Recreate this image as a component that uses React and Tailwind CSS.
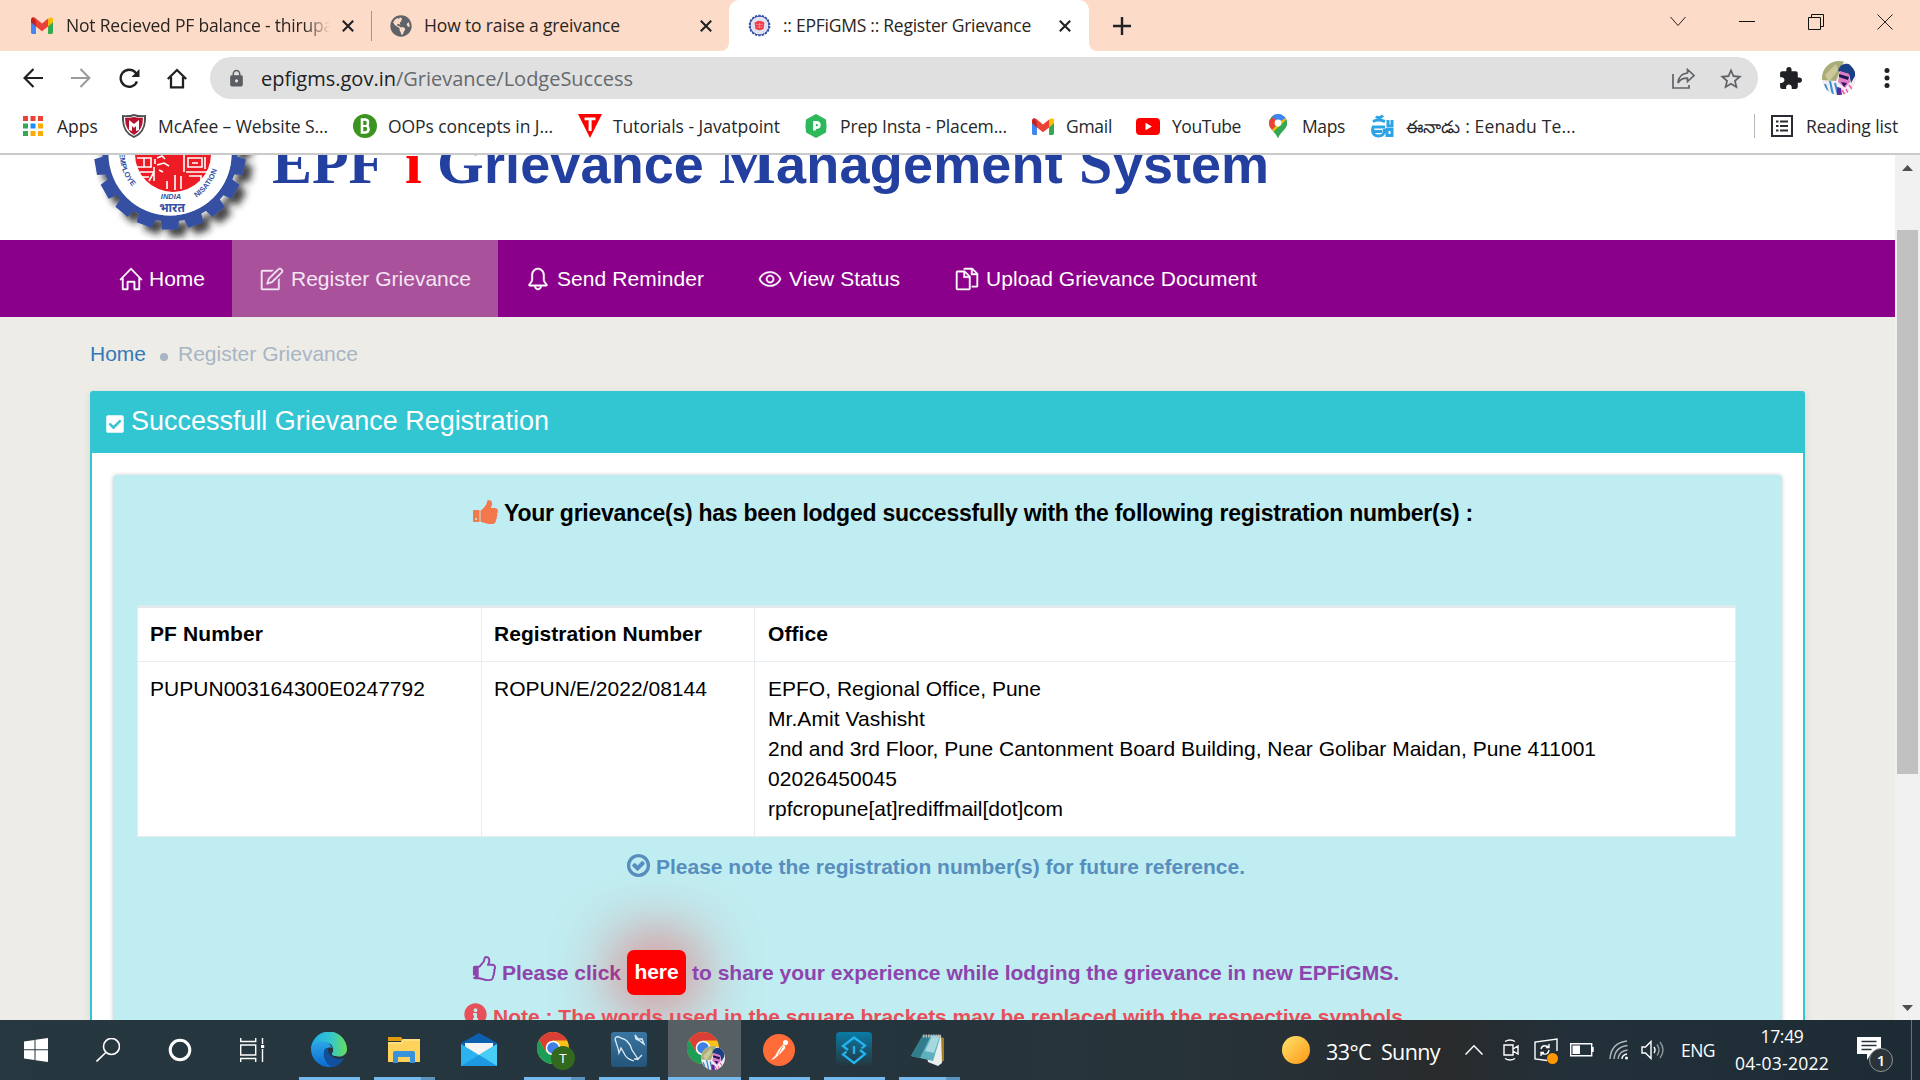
import React, { useLayoutEffect, useRef, useState } from "react";
import { SlHome, SlNote, SlBell, SlEye, SlDocs } from "react-icons/sl";
import { FaCheckSquare, FaInfoCircle, FaGlobeAmericas } from "react-icons/fa";
import { MdExtension, MdLock, MdStarBorder } from "react-icons/md";

/* Text run whose tracking is adjusted so that it spans `w` pixels. */
function T({ w, className = "", children }) {
  const ref = useRef(null);
  const [ls, setLs] = useState(0);
  useLayoutEffect(() => {
    const n = ref.current.textContent.length;
    setLs((w - ref.current.getBoundingClientRect().width) / n);
  }, [w]);
  return (
    <span ref={ref} className={"inline-block shrink-0 whitespace-pre " + className} style={{ letterSpacing: ls + "px" }}>
      {children}
    </span>
  );
}

const Gmail = ({ className = "" }) => (
  <svg viewBox="0 0 24 18" preserveAspectRatio="none" className={"h-[17px] w-[22px] shrink-0 " + className}>
    <path d="M0 3v13.500Q0 18 1.600 18H5.400V7z" fill="#4285f4" />
    <path d="M24 3v13.500q0 1.500-1.600 1.500H18.600V7z" fill="#34a853" />
    <path d="M18.600 1.500L22 .3Q24 .8 24 3v2.500L18.600 10z" fill="#fbbc04" />
    <path d="M5.400 1.500L2 .3Q0 .8 0 3v2.500L5.400 10z" fill="#c5221f" />
    <path d="M2 .3Q3.500-.2 5.400 1.500L12 6.800l6.600-5.300V10L12 15.200 5.400 10V4z" fill="#ea4335" />
  </svg>
);

const Cross = ({ className = "" }) => (
  <svg viewBox="0 0 12 12" className={"h-3 w-3 shrink-0 " + className} stroke="#202124" strokeWidth="2.100">
    <path d="M.8.8l10.400 10.400M11.200.8L.8 11.200" />
  </svg>
);

const TEETH = Array.from({ length: 18 }, (_, i) => i * 20);

function Gear() {
  return (
    <g fill="#3650a2">
      {TEETH.map((a) => (
        <path key={a} d="M-9.500 63L-8 75.500H8L9.500 63z" transform={`rotate(${a})`} />
      ))}
      <path fillRule="evenodd" d="M-67.500 0a67.500 67.500 0 1 0 135 0a67.500 67.500 0 1 0-135 0M-61.500 0a61.500 61.500 0 1 1 123 0a61.500 61.500 0 1 1-123 0" />
    </g>
  );
}

function Emblem() {
  return (
    <svg viewBox="-91 1 180 85" className="h-[85px] w-[180px] shrink-0">
      <defs>
        <filter id="soft" x="-20%" y="-20%" width="140%" height="140%">
          <feDropShadow dx="7" dy="7" stdDeviation="3.500" floodColor="#222" floodOpacity="0.85" />
        </filter>
        <path id="arcL" d="M-48 -6A48 48 0 0 0 -10 47" />
        <path id="arcR" d="M16 50A52.500 52.500 0 0 0 51 -6" />
      </defs>
      <g transform="translate(-3 0)">
        <g filter="url(#soft)" transform="translate(2 0)">
          <Gear />
        </g>
        <circle cx="2" r="61.500" fill="#fff" />
        <circle cx="5" r="38" fill="#ed1c24" />
        <g fill="none" stroke="#fff" strokeWidth="1.600" transform="translate(4 0)">
          <path d="M-35 4h14v9h-14M-32 18h14v-5M-28 4v9M-30 23l7 0M-18 27v-9l-5 9M-15 4l5-2 3 3M-15 11l7-2 5 3M-13 16l4 2M12 1v17M16 4h14v9H16zM20 9h6M14 18h21M17 22h12v5M3 21v15M9 22v13M-5 27v8" />
          <path d="M33 3v12M-17 5v5" />
        </g>
        <g fill="#3650a2" fontFamily="Liberation Sans" fontSize="7.500">
          <text fontWeight="bold"><textPath href="#arcL" startOffset="5">EMPLOYE</textPath></text>
          <text fontWeight="bold"><textPath href="#arcR" startOffset="14">NISATION</textPath></text>
          <text x="3" y="45" textAnchor="middle" fontStyle="italic">INDIA</text>
          <text x="4" y="58" textAnchor="middle" fontSize="12" fontFamily="Noto Sans, sans-serif">भारत</text>
        </g>
      </g>
    </svg>
  );
}

function TabStrip() {
  return (
    <div className="flex h-[51px] items-center bg-[#fcdbc8] text-[17.5px] text-[#2b2522]">
      <Gmail className="ml-[31px]" />
      <div className="ml-[13px] w-[266px] overflow-hidden [mask-image:linear-gradient(to_right,black_238px,transparent_264px)]">
        <T w={267}>Not Recieved PF balance - thirupa</T>
      </div>
      <Cross className="ml-[10px]" />
      <div className="ml-[17px] h-[30px] w-px bg-[#a8938a]" />
      <FaGlobeAmericas className="ml-[18px] h-[22px] w-[22px] text-[#5f6368]" />
      <T w={196} className="ml-[12px]">How to raise a greivance</T>
      <Cross className="ml-[80px]" />
      <div className="ml-[9px] flex h-full items-end">
        <div className="h-2.5 w-2 bg-white">
          <div className="h-full w-full rounded-br-lg bg-[#fcdbc8]" />
        </div>
        <div className="flex h-full w-[360px] items-center rounded-t-[10px] bg-white">
          <svg viewBox="-80 -80 160 160" className="ml-[19px] h-[23px] w-[23px]">
            <Gear />
            <circle r="60" fill="#dfe2f3" />
            <path d="M-34-20Q0-45 34-20L28 25Q0 40-28 25z" fill="#ef3b42" />
            <path d="M-25-8h50M-20 10h40M0-20v40" stroke="#f9a" strokeWidth="5" />
          </svg>
          <T w={248} className="ml-[12px]">:: EPFiGMS :: Register Grievance</T>
          <Cross className="ml-[28px]" />
        </div>
        <div className="h-2.5 w-2 bg-white">
          <div className="h-full w-full rounded-bl-lg bg-[#fcdbc8]" />
        </div>
      </div>
      <svg viewBox="0 0 18 18" className="ml-[16px] h-[18px] w-[18px]" stroke="#202124" strokeWidth="2.400">
        <path d="M0 9h18M9 0v18" />
      </svg>
      <div className="mr-[27px] mb-2 ml-auto flex items-center gap-[53px]">
        <svg viewBox="0 0 16 16" className="h-4 w-4" fill="none" stroke="#222">
          <path d="M.5 3L8 11.500 15.500 3" />
        </svg>
        <svg viewBox="0 0 16 16" className="h-4 w-4" stroke="#111">
          <path d="M0 7.500h16" />
        </svg>
        <svg viewBox="0 0 16 16" className="h-4 w-4" fill="none" stroke="#111">
          <path d="M.5 3.500h12v12H.5zM3.500 3.500v-3h12v12h-3" />
        </svg>
        <svg viewBox="0 0 16 16" className="h-4 w-4" stroke="#222">
          <path d="M.5.5l15 15M15.500.5l-15 15" />
        </svg>
      </div>
    </div>
  );
}

function Avatar({ className = "", id }) {
  return (
    <svg viewBox="0 0 34 34" className={className}>
      <clipPath id={id}><circle cx="17" cy="17" r="17" /></clipPath>
      <g clipPath={`url(#${id})`}>
        <path d="M0 0h34v34H0z" fill="#f2edf4" />
        <path d="M0 0h22L14 20 0 19z" fill="#a9ae78" />
        <path d="M3 14L14 3l2 6-9 12z" fill="#cfc79c" />
        <path d="M16 10Q18 1 28 3q6 3 5 12l-4 7-2-9-8-2z" fill="#1b3f86" />
        <path d="M18 10l9 3 1 8-5 6-7-6z" fill="#e07cc4" />
        <path d="M17 13l10 3-1 3-9-3z" fill="#1a1550" />
        <path d="M19 21l6 1-3 4z" fill="#301668" />
        <path d="M8 20l3 14M3 23l4 11M13 22l3 12" stroke="#3d8fc9" strokeWidth="2" />
        <path d="M15 26l4 1 1 7h-5z" fill="#5c2aa0" />
        <path d="M20 29l3 5M27 24l3 4M24 28l2 4" stroke="#f25aa5" strokeWidth="1.500" />
      </g>
    </svg>
  );
}

function Toolbar() {
  return (
    <div className="flex h-[54px] items-center bg-white">
      <svg viewBox="0 0 20 20" className="ml-[23px] h-5 w-5" fill="none" stroke="#202124" strokeWidth="2.200">
        <path d="M20 10H2M10.500 1L1.600 10l8.900 9" />
      </svg>
      <svg viewBox="0 0 20 20" className="ml-[28px] h-5 w-5" fill="none" stroke="#9b9b9b" strokeWidth="2">
        <path d="M0 10h18M9.500 1l8.900 9-8.900 9" />
      </svg>
      <svg viewBox="0 0 21 21" className="ml-[28px] h-[21px] w-[21px]" fill="none" stroke="#202124" strokeWidth="2.400">
        <path d="M18 13.500A8.500 8.500 0 1 1 16.500 4.500L18 6" />
        <path d="M20.500 1v8h-8z" fill="#202124" stroke="none" />
      </svg>
      <svg viewBox="0 0 20 20" className="ml-[27px] h-[21px] w-[20px]" fill="none" stroke="#202124" strokeWidth="2.300">
        <path d="M.8 10.500L10 1.500l9.200 9M4 8.500v10.300h12V8.500" />
      </svg>
      <div className="ml-[23px] flex h-[42px] w-[1548px] items-center rounded-full bg-[#e0e0e0] pt-px">
        <MdLock className="ml-[17px] h-[19px] w-[19px] text-[#5a5d61]" />
        <T w={135} className="ml-[15px] text-[20px] text-[#202124]">epfigms.gov.in</T>
        <T w={237} className="text-[20px] text-[#666a6e]">/Grievance/LodgeSuccess</T>
        <svg viewBox="0 0 23 21" className="ml-auto h-[21px] w-[23px]" fill="none" stroke="#5f6368" strokeWidth="1.700">
          <path d="M1 6v14h16v-3" />
          <path d="M15.500 1.500L22 7.500l-6.500 6v-3.300Q9 10 6 15 6.500 6 15.500 5z" />
        </svg>
        <MdStarBorder className="mr-[14px] ml-[23px] h-[26px] w-[26px] text-[#5f6368]" />
      </div>
      <MdExtension className="ml-[20px] h-[25px] w-[25px] text-[#202124]" />
      <Avatar id="av1" className="ml-[19px] h-[34px] w-[34px]" />
      <svg viewBox="0 0 6 20" className="ml-[28px] h-5 w-1.5" fill="#202124">
        <circle cx="3" cy="2.500" r="2.500" /><circle cx="3" cy="10" r="2.500" /><circle cx="3" cy="17.500" r="2.500" />
      </svg>
    </div>
  );
}

const APP_DOTS = ["#ea4335", "#ea4335", "#ea4335", "#34a853", "#1a8cff", "#fbab04", "#34a853", "#fbab04", "#fbab04"];

function Bookmarks() {
  return (
    <div className="flex h-[48px] items-center bg-white pb-[6px] text-[17.5px] text-[#26282b]">
      <svg viewBox="0 0 20 20" className="ml-[23px] h-5 w-5">
        {APP_DOTS.map((c, i) => (
          <rect key={i} x={(i % 3) * 7.5} y={Math.floor(i / 3) * 7.5} width="5" height="5" fill={c} />
        ))}
      </svg>
      <T w={41} className="ml-[14px]">Apps</T>
      <svg viewBox="0 0 24 24" className="ml-[24px] h-6 w-6">
        <path d="M0 1q6 1 12-1 6 2 12 1 1 18-12 23Q-1 19 0 1z" fill="#4b4e50" />
        <path d="M2 3q5 1 10-1 5 2 10 1 1 14-10 19Q1 17 2 3z" fill="#fff" />
        <path d="M3 4q5 0 9-1 4 1 9 1 0 12-9 17Q3 16 3 4z" fill="#b5122f" />
        <path d="M7 16V6l5 4 5-4v10l-3 1v-5l-2 2-2-2v5z" fill="#fff" />
      </svg>
      <T w={170} className="ml-[12px]">McAfee – Website S...</T>
      <svg viewBox="0 0 24 24" className="ml-[25px] h-6 w-6">
        <circle cx="12" cy="12" r="12" fill="#3c9420" />
        <path d="M9 5.500h3.500q2.500.3 2.500 3 0 2.500-1 3.300 1.500 1 1.500 3.500 0 3-3 3.200H9z" fill="none" stroke="#fff" strokeWidth="2.600" />
        <path d="M9 12h4" stroke="#fff" strokeWidth="2" />
      </svg>
      <T w={165} className="ml-[11px]">OOPs concepts in J...</T>
      <svg viewBox="0 0 24 24" className="ml-[25px] h-6 w-6">
        <path d="M0 0h24L12 24z" fill="#f00" />
        <path d="M6.500 3.500h11v2.700h-3.900V17h-3V6.200H6.500z" fill="#fff" />
      </svg>
      <T w={167} className="ml-[11px]">Tutorials - Javatpoint</T>
      <svg viewBox="0 0 22 24" className="ml-[25px] h-6 w-[22px]">
        <path d="M11 0l10 5.500q1 6.500 0 13L11 24 1 18.500q-1-6.500 0-13z" fill="#2eb85c" />
        <path d="M9.500 16.500v-8h2.500q2.300.3 2.300 2.600t-2.300 2.500H9.500" fill="none" stroke="#fff" strokeWidth="2.800" />
      </svg>
      <T w={167} className="ml-[13px]">Prep Insta - Placem...</T>
      <Gmail className="ml-[25px]" />
      <T w={46} className="ml-[12px]">Gmail</T>
      <svg viewBox="0 0 24 17" className="ml-[24px] h-[17px] w-6">
        <rect width="24" height="17" rx="4" fill="#f00" /><path d="M9.500 4.800v7.400L16 8.500z" fill="#fff" />
      </svg>
      <T w={69} className="ml-[12px]">YouTube</T>
      <svg viewBox="0 0 18 24" className="ml-[28px] h-6 w-[18px]">
        <clipPath id="pin"><path d="M9 0a9 9 0 0 1 9 9c0 6-6 8-9 15C6 17 0 15 0 9a9 9 0 0 1 9-9z" /></clipPath>
        <g clipPath="url(#pin)">
          <path d="M0 0h18v24H0z" fill="#34a853" />
          <path d="M9 9L0-1h18v7z" fill="#4285f4" />
          <path d="M9 9L3 16-2 14-1 8 4 3z" fill="#ea4335" />
          <path d="M9 10L1 18l2 3L18 5 14 3z" fill="#fbbc04" />
          <path d="M4 1L18-1 18 3 9 9z" fill="#4285f4" />
          <path d="M18 5v19H6L4 18z" fill="#34a853" />
        </g>
        <circle cx="9" cy="9" r="3.400" fill="#fff" />
      </svg>
      <T w={43} className="ml-[15px]">Maps</T>
      <svg viewBox="0 0 24 24" className="ml-[25px] h-6 w-6" fill="none" stroke="#2ba3e6" strokeWidth="3">
        <path d="M6 2.500q3 3 7-1M3 7.500q5-3 12 0M2 13h13M3 13q-2 9 6 9 6 0 5-7M4 17.500h8M18 6v6h4V6M17 15.500h5v6h-5z" />
      </svg>
      <T w={170} className="ml-[12px]">ఈనాడు : Eenadu Te...</T>
      <div className="ml-auto h-6 w-px bg-[#b9b9b9]" />
      <svg viewBox="0 0 22 22" className="ml-[16px] h-[22px] w-[22px]" fill="none" stroke="#2b2c33" strokeWidth="2">
        <path d="M1 1h20v20H1zM5 6.500h2.500M9 6.500h8M5 11h2.500M9 11h8M5 15.500h2.500M9 15.500h8" />
      </svg>
      <T w={92} className="mr-[22px] ml-[13px]">Reading list</T>
    </div>
  );
}

function PageHeader() {
  return (
    <div className="flex h-[85px] overflow-hidden bg-white pl-[80px] text-[54px] font-bold text-[#2340a0]">
      <Emblem />
      <div className="-mt-[24px] ml-[12px] flex h-[70px] items-baseline leading-[64px]">
        <span className="font-['Liberation_Serif'] text-[60px]"><T w={113}>EPF</T></span>
        <span className="ml-[20px] font-['Liberation_Serif'] text-[60px]"><T w={17} className="text-[#f00]">i</T></span>
        <span className="ml-[15px] font-['Liberation_Serif'] text-[60px]"><T w={47}>G</T></span>
        <T w={220}>rievance</T>
        <span className="ml-[15px] font-['Liberation_Serif'] text-[60px]"><T w={57}>M</T></span>
        <T w={287}>anagement</T>
        <span className="ml-[16px] font-['Liberation_Serif'] text-[60px]"><T w={34}>S</T></span>
        <T w={156}>ystem</T>
      </div>
    </div>
  );
}

const NAV_ICON = "h-[22px] w-[22px] overflow-visible stroke-current [stroke-width:22px]";

function NavBar() {
  return (
    <nav className="flex h-[77px] bg-[#8b008b] text-[21px] text-white">
      <div className="flex w-[232px] items-center pl-[120px]">
        <SlHome className={NAV_ICON} /><T w={56} className="ml-[7px]">Home</T>
      </div>
      <div className="flex w-[266px] items-center bg-[#a9519b] pl-[29px] text-[#f4e6f2]">
        <SlNote className={NAV_ICON} /><T w={180} className="ml-[8px]">Register Grievance</T>
      </div>
      <div className="flex items-center pl-[29px]">
        <SlBell className={NAV_ICON} /><T w={147} className="ml-[8px]">Send Reminder</T>
      </div>
      <div className="flex items-center pl-[55px]">
        <SlEye className={NAV_ICON} /><T w={111} className="ml-[8px]">View Status</T>
      </div>
      <div className="flex items-center pl-[56px]">
        <SlDocs className={NAV_ICON} /><T w={271} className="ml-[8px]">Upload Grievance Document</T>
      </div>
    </nav>
  );
}

const THUMB =
  "M320 1344q0-26-19-45t-45-19q-27 0-45.500 19t-18.500 45q0 27 18.500 45.500t45.500 18.500q26 0 45-18.500t19-45.500zm160-512v640q0 26-19 45t-45 19h-288q-26 0-45-19t-19-45v-640q0-26 19-45t45-19h288q26 0 45 19t19 45zm1184 0q0 86-55 149 15 44 15 76 3 76-43 137 17 56 0 117-15 57-54 94 9 112-49 181-64 76-197 78h-129q-66 0-144-15.500t-121.500-29-120.500-39.500q-123-43-158-44-26-1-45-19.500t-19-44.500v-641q0-25 18-43.500t43-20.500q24-2 76-59t101-121q68-87 101-120 18-18 31-48t17.500-48.500 13.500-60.500q7-39 12.500-61t19.500-52 34-50q19-19 45-19 46 0 82.500 10.500t60 26 40 40.500 24 45 12 50 5 45 .5 39q0 38-9.500 76t-19 60-27.500 56q-3 6-10 18t-11 22-8 24h277q78 0 135 57t57 135z";
const THUMB_OUTLINE =
  "M256 1344q0-26-19-45t-45-19-45 19-19 45 19 45 45 19 45-19 19-45zm1280-576q0-51-39-89.500t-89-38.500h-352q0-58 48-159.500t48-160.500q0-98-32-145t-128-47q-26 26-38 85t-30.500 125.500-59.500 109.500q-22 23-77 91-4 5-23 30t-31.500 41-34.500 42.500-40 44-38.500 35.500-40 27-35.500 9h-32v640h32q13 0 31.500 3t33 6.500 38 11 35 11.500 35.500 12.500 29 10.500q211 73 342 73h121q192 0 192-167 0-26-5-56 30-16 47.500-52.500t17.500-73.500-18-69q53-50 53-119 0-25-10-55.500t-25-47.500q32-1 53.500-47t21.500-81zm128-1q0 89-49 163 9 33 9 69 0 77-38 144 3 21 3 43 0 101-60 178 1 139-85 219.500t-227 80.500h-129q-96 0-189.500-22.500t-216.500-65.500q-116-40-138-40h-288q-53 0-90.500-37.500t-37.500-90.500v-640q0-53 37.500-90.500t90.500-37.500h274q36-24 137-155 58-75 107-128 24-25 35.500-85.500t30.500-126.500 62-108q39-37 90-37 84 0 151 32.500t102 101.500 35 186q0 93-48 192h176q104 0 180 76t76 179z";
const CHECK =
  "M1299 813l-422 422q-19 19-45 19t-45-19l-294-294q-19-19-19-45t19-45l102-102q19-19 45-19t45 19l147 147 275-275q19-19 45-19t45 19l102 102q19 19 19 45t-19 45zm141 83q0-148-73-273t-198-198-273-73-273 73-198 198-73 273 73 273 198 198 273 73 273-73 198-198 73-273zm224 0q0 209-103 385.500t-279.500 279.500-385.500 103-385.500-103-279.500-279.500-103-385.500 103-385.500 279.500-279.500 385.500-103 385.500 103 279.500 279.500 103 385.500z";

function ResultTable() {
  return (
    <table className="ml-[24px] h-[232px] w-[1599px] table-fixed border-collapse border border-t-[3px] border-[#dfe9ee] bg-white text-left text-[21px] leading-[30px] text-black">
      <colgroup>
        <col className="w-[344px]" /><col className="w-[273px]" /><col />
      </colgroup>
      <thead>
        <tr className="h-[55px]">
          <th className="border border-[#e7ecf1] px-3 pt-0 pb-0.5"><T w={113}>PF Number</T></th>
          <th className="border border-[#e7ecf1] px-3 pt-0 pb-0.5"><T w={208}>Registration Number</T></th>
          <th className="border border-[#e7ecf1] pt-0 pr-3 pb-0.5 pl-[13px]"><T w={60}>Office</T></th>
        </tr>
      </thead>
      <tbody>
        <tr className="align-top">
          <td className="border border-[#e7ecf1] px-3 pt-3"><T w={275}>PUPUN003164300E0247792</T></td>
          <td className="border border-[#e7ecf1] px-3 pt-3"><T w={213}>ROPUN/E/2022/08144</T></td>
          <td className="border border-[#e7ecf1] pt-3 pr-3 pl-[13px]">
            <div className="flex flex-col items-start">
              <T w={273}>EPFO, Regional Office, Pune</T>
              <T w={157}>Mr.Amit Vashisht</T>
              <T w={828}>2nd and 3rd Floor, Pune Cantonment Board Building, Near Golibar Maidan, Pune 411001</T>
              <T w={129}>02026450045</T>
              <T w={295}>rpfcropune[at]rediffmail[dot]com</T>
            </div>
          </td>
        </tr>
      </tbody>
    </table>
  );
}

function Content() {
  return (
    <div className="h-[703px] overflow-hidden bg-[#eeece7] pl-[90px] font-['Liberation_Sans',Arial,sans-serif]">
      <div className="flex h-[74px] items-center text-[21px]">
        <T w={56} className="text-[#337ab7]">Home</T>
        <span className="mt-[5px] ml-[14px] h-2 w-2 rounded-full bg-[#a7b5c5]" />
        <T w={180} className="ml-[10px] text-[#a7b5c5]">Register Grievance</T>
      </div>
      <div className="h-[680px] w-[1715px] rounded-t-[3px] border-x-2 border-[#32c5d2] bg-white shadow-[0_2px_6px_2px_rgba(0,0,0,0.06)]">
        <div className="flex h-[62px] items-center bg-[#32c5d2] pl-[13px] text-white">
          <FaCheckSquare className="mt-[3px] h-[20px] w-[20px]" />
          <T w={418} className="mb-[2px] ml-[6px] text-[27px]">Successfull Grievance Registration</T>
        </div>
        <div className="mt-[22px] ml-[21px] h-[700px] w-[1669px] rounded bg-[#c0edf1] font-bold shadow-[0_0_4px_rgba(0,0,0,0.2)]">
          <div className="flex h-[130px] items-start pt-[23px] pl-[359px]">
            <svg viewBox="0 0 1792 1792" className="h-[28px] w-[28px]" fill="#f3784b"><path d={THUMB} /></svg>
            <T w={969} className="mt-px ml-[4px] text-[23px] leading-[28px] text-black">Your grievance(s) has been lodged successfully with the following registration number(s) :</T>
          </div>
          <div className="font-normal"><ResultTable /></div>
          <div className="mt-[15px] flex h-[30px] items-center pl-[512px] text-[#578ebe]">
            <svg viewBox="0 0 1792 1792" className="mb-1 h-[27px] w-[27px]" fill="currentColor"><path d={CHECK} /></svg>
            <T w={589} className="ml-[4px] text-[21px]">Please note the registration number(s) for future reference.</T>
          </div>
          <div className="mt-[68px] flex h-[45px] items-center pl-[358px] text-[21px] text-[#8e44ad]">
            <svg viewBox="0 0 1792 1792" className="mb-[6px] h-[27px] w-[27px]" fill="currentColor"><path d={THUMB_OUTLINE} /></svg>
            <T w={119} className="ml-[4px]">Please click</T>
            <div className="ml-[6px] flex h-[45px] w-[59px] items-center justify-center rounded-[7px] bg-[#f00] pb-0.5 text-white shadow-[0_0_70px_#f00]">
              <T w={44}>here</T>
            </div>
            <T w={707} className="ml-[6px]">to share your experience while lodging the grievance in new EPFiGMS.</T>
          </div>
          <div className="mt-[8px] flex items-start pl-[351px] text-[#e7505a]">
            <FaInfoCircle className="h-[23px] w-[23px]" />
            <T w={910} className="mt-[2px] ml-[6px] text-[21px] leading-[24px]">Note : The words used in the square brackets may be replaced with the respective symbols</T>
          </div>
        </div>
      </div>
    </div>
  );
}

function ScrollBar() {
  return (
    <div className="flex w-[25px] flex-col items-center bg-[#f1f1f1]">
      <svg viewBox="0 0 11 6" className="mt-[10px] h-[6px] w-[11px]" fill="#505050"><path d="M5.500 0L11 6H0z" /></svg>
      <div className="mt-[59px] h-[544px] w-[21px] bg-[#c1c1c1]" />
      <svg viewBox="0 0 11 6" className="mt-auto mb-[9px] h-[6px] w-[11px]" fill="#505050"><path d="M5.500 6L11 0H0z" /></svg>
    </div>
  );
}

const Chrome = () => (
  <>
    <circle cx="16" cy="16" r="16" fill="#fbc116" />
    <path d="M2.100 8A16 16 0 0 1 30 8.500H16L9 20z" fill="#d93f35" />
    <path d="M2.100 8A16 16 0 0 0 16 32l7-12-7 2-7-2z" fill="#1d9d58" />
    <circle cx="16" cy="16" r="7.300" fill="#fff" />
    <circle cx="16" cy="16" r="5.800" fill="#3f7fe8" />
  </>
);

function Task({ children, line = "full", active = false }) {
  return (
    <div className={"flex h-full w-[75px] flex-col items-center justify-end " + (active ? "px-px" : "px-[7px]")}>
      <div className={"flex w-full flex-1 items-center justify-center pt-0.5 " + (active ? "bg-[#566064]" : "")}>{children}</div>
      <div className="flex h-[3px] w-full">
        {line !== "none" && <div className="h-full flex-1 bg-[#76b9ed]" />}
        {line === "split" && <div className="h-full w-[14px] bg-[#5c93be]" />}
      </div>
    </div>
  );
}

function TaskBar() {
  return (
    <div className="flex h-[60px] items-stretch bg-[linear-gradient(90deg,#27373f_0%,#25353e_40%,#26343a_60%,#262e33_70%,#292b2b_75%,#22303a_82%,#1d2b35_100%)] text-white">
      <div className="flex w-[292px] items-center">
        <svg viewBox="0 0 24 24" className="ml-[24px] h-6 w-6" fill="#fff">
          <path d="M0 3.500L10.500 2v9.300H0zM11.500 1.800L24 0v11.300H11.500zM0 12.300h10.500V22L0 20.500zM11.500 12.300H24V24l-12.500-1.800z" />
        </svg>
        <svg viewBox="0 0 24 24" className="ml-[48px] h-6 w-6" fill="none" stroke="#fff" strokeWidth="1.600">
          <circle cx="15.500" cy="8.500" r="8" /><path d="M9.800 14.500L.5 23.500" />
        </svg>
        <svg viewBox="0 0 24 24" className="ml-[48px] h-6 w-6" fill="none" stroke="#fff" strokeWidth="3">
          <circle cx="12" cy="12" r="9.800" />
        </svg>
        <svg viewBox="0 0 25 24" className="ml-[48px] h-6 w-[25px]" fill="none" stroke="#fff" strokeWidth="1.400">
          <path d="M.7 0v3.500h15V0M.7 7h15v10h-15zM.7 24v-3.500h15V24M22.500 0v6M22.500 11v13" /><path d="M21 7h3.200v3H21z" fill="#fff" stroke="none" />
        </svg>
      </div>
      <Task>
        <svg viewBox="0 0 36 36" className="mr-0.5 h-9 w-9">
          <defs>
            <linearGradient id="eg" x1="0" x2="1"><stop offset="0" stopColor="#1cace8" /><stop offset=".55" stopColor="#35c5ce" /><stop offset="1" stopColor="#66e05a" /></linearGradient>
            <linearGradient id="eb" y1="0" y2="1" x2="0"><stop offset="0" stopColor="#2ba8e8" /><stop offset="1" stopColor="#0c6bd0" /></linearGradient>
          </defs>
          <path d="M0 18a18 18 0 0 1 36-1c0 6-5 8-9 7.500-4 0-7-1.500-6-3 3-4 0-11-6-11S2 12 0 18z" fill="url(#eg)" />
          <path d="M0 18c0-6 6-9 11-9 6 0 9 4 10 7-6-2-9 3-8 8s5 9 11 10A18 18 0 0 1 0 18z" fill="url(#eb)" />
          <path d="M13 21c0-3 1-5 4-5-1 6 5 11 12 11 2 0 3-1 4-.5C30 32 25 35 22 35c-6-1-9-8-9-14z" fill="#124f9d" />
        </svg>
      </Task>
      <Task line="split">
        <svg viewBox="0 0 32 26" className="mr-0.5 h-[26px] w-8">
          <path d="M0 0h13l3 4H0z" fill="#e09c0c" /><path d="M0 5h13l2-3h17v23H0z" fill="#ffd35b" />
          <path d="M0 5h13l2-3H32v2H16l-2 3H0z" fill="#ffdf80" />
          <path d="M5 26V16q0-2 2-2h18q2 0 2 2v10h-5v-6H10v6z" fill="#3b92dc" />
        </svg>
      </Task>
      <Task line="none">
        <svg viewBox="0 0 36 33" className="mr-0.5 h-[33px] w-9">
          <path d="M0 10L18 0l18 10v6H0z" fill="#0d5fb0" /><path d="M4 10h28v13H4z" fill="#f4f4f4" />
          <path d="M0 11l18 11L36 11v22H0z" fill="#2cb2ee" /><path d="M18 22L36 11v22z" fill="#48cdf6" /><path d="M0 33l18-11 18 11z" fill="#1e98e2" />
        </svg>
      </Task>
      <Task line="split">
        <svg viewBox="0 0 38 38" className="mt-0.5 ml-0.5 h-[38px] w-[38px]">
          <Chrome /><circle cx="26" cy="26" r="12" fill="#33691e" />
          <text x="26" y="31" textAnchor="middle" fontSize="13" fill="#fff" fontFamily="Roboto">T</text>
        </svg>
      </Task>
      <Task>
        <svg viewBox="0 0 36 35" className="mr-0.5 h-[35px] w-9">
          <defs><linearGradient id="sq" y1="0" y2="1" x2="0"><stop offset="0" stopColor="#3a76a3" /><stop offset="1" stopColor="#24547a" /></linearGradient></defs>
          <rect width="36" height="35" rx="3" fill="url(#sq)" />
          <path d="M5 10c-2-4 0-7 5-4 5 1 9 5 11 12l6 9-4 0M5 10c1 4 2 5 3 11l2-5 4 7c2 4 6 5 9 6M24 3l3 4 4 0 2 5-4-3-4-2zM26 28l5-5" fill="none" stroke="#dcebf5" strokeWidth="1.300" />
        </svg>
      </Task>
      <Task active>
        <div className="relative mt-0.5 ml-0.5 h-[38px] w-[38px]">
          <svg viewBox="0 0 38 38" className="h-[38px] w-[38px]"><Chrome /></svg>
          <Avatar id="av2" className="absolute right-0 bottom-0 h-6 w-6" />
        </div>
      </Task>
      <Task>
        <svg viewBox="0 0 32 32" className="mr-0.5 h-8 w-8">
          <circle cx="16" cy="16" r="16" fill="#ff6c37" />
          <circle cx="22.500" cy="8.500" r="2.600" fill="#fff" />
          <path d="M20 10.500q3 1 2 4L17 20l-6 5-3 1 4-4 4-7z" fill="#fff" /><path d="M20 12l-5 9" stroke="#ff6c37" strokeWidth=".8" />
        </svg>
      </Task>
      <Task>
        <svg viewBox="0 0 36 36" className="mr-0.5 h-9 w-9">
          <defs><linearGradient id="sg" y1="0" y2="1" x2="0"><stop offset="0" stopColor="#0a7ba6" /><stop offset="1" stopColor="#263238" /></linearGradient></defs>
          <rect width="36" height="36" rx="4" fill="url(#sg)" />
          <path d="M12 18l-5-4L18 5.500l11 8-3.500 3M24 18l5 4-11 9-11-8.500 3.500-3M18 14v8" fill="none" stroke="#23b3ef" strokeWidth="2.300" />
        </svg>
      </Task>
      <Task line="split">
        <svg viewBox="0 0 34 32" className="mr-1 h-8 w-[34px]">
          <path d="M29 3l4 1v23l-5 1z" fill="#a97b21" />
          <path d="M12 1h18l1 28-4 3-10-4z" fill="#e9eeee" />
          <path d="M12 1h18L22 27 0 22z" fill="#5fb0be" /><path d="M12 1h8L9 24 0 22z" fill="#2f7d8d" /><path d="M21 2h8l-6 17-9-2z" fill="#a6d8df" />
          <path d="M12 2h18" stroke="#bbb" strokeWidth="3" strokeDasharray="1.500 1" />
        </svg>
      </Task>
      <div className="ml-auto flex items-center">
        <div className="h-7 w-7 rounded-full bg-linear-to-br from-[#ffe566] to-[#ff9500]" />
        <T w={114} className="mt-1 ml-[16px] text-[21.5px]">33°C  Sunny</T>
        <svg viewBox="0 0 18 10" className="ml-[25px] h-2.5 w-[18px]" fill="none" stroke="#fff" strokeWidth="1.500"><path d="M.5 9.500L9 .8l8.500 8.700" /></svg>
        <svg viewBox="0 0 16 22" className="ml-[20px] h-[22px] w-4" fill="none" stroke="#fff" strokeWidth="1.400"><path d="M1 6h9v10H1zM10 10l5-3v8l-5-3M2 2.500Q7-.5 12 2.500M2 19.500q5 3 10 0" /></svg>
        <div className="relative ml-[15px] h-6 w-[24px]">
          <svg viewBox="0 0 24 24" className="h-6 w-6" fill="none" stroke="#fff" strokeWidth="1.400"><path d="M23 13V1L1 4v17l12 1.500M7 11q1-4 5-3l3 1M15 6v3.500h-3M15 12q-1 5-5 4l-3-1M7 18v-3.500h3" /></svg>
          <span className="absolute right-0 -bottom-0.5 h-[11px] w-[11px] rounded-full bg-[#ff9800]" />
        </div>
        <svg viewBox="0 0 24 14" className="ml-[12px] h-3.5 w-6" fill="none" stroke="#fff" strokeWidth="1.400"><path d="M.7.7h21v12H.7zM23 4v5" /><path d="M2.500 2.500h7.500v8.500H2.500z" fill="#fff" stroke="none" /></svg>
        <svg viewBox="0 0 20 20" className="ml-[15px] h-5 w-5" fill="none" stroke="#aeb6ba" strokeWidth="1.400"><path d="M1 19Q2 3 18 1M5 19Q6 7 18.500 5.500M9 19q1-8 9.500-9" /><path d="M13 19q0-4 5-5" stroke="#fff" /><circle cx="17.500" cy="18" r="1.500" fill="#fff" stroke="none" /></svg>
        <svg viewBox="0 0 24 20" className="ml-[12px] h-5 w-6" fill="none" stroke="#fff" strokeWidth="1.400"><path d="M1 7h3.500L10 1.500v17L4.500 13H1zM13 7q2 3 0 6" /><path d="M16 4.500q4 5.500 0 11M19 2q6 8 0 16" stroke="#8d979c" /></svg>
        <T w={34} className="ml-[16px] text-[17.5px]">ENG</T>
        <div className="ml-[20px] flex h-[54px] w-[94px] flex-col items-center justify-between text-[17.5px] leading-[27px]">
          <T w={43}>17:49</T>
          <T w={94}>04-03-2022</T>
        </div>
        <div className="relative ml-[28px] h-7 w-9">
          <svg viewBox="0 0 24 24" className="h-6 w-6"><path d="M0 1h24v17H14l-4 6v-6H0z" fill="#fff" /><path d="M4.500 5.500h15M4.500 9.500h15M4.500 13.500h10" stroke="#26323a" strokeWidth="1.300" /></svg>
          <span className="absolute right-0 -bottom-2 flex h-6 w-6 items-center justify-center rounded-full border border-[#8c9396] bg-[#2c3338] text-[15px] font-semibold">1</span>
        </div>
        <div className="mr-[8px] ml-[18px] h-[60px] w-px bg-[#66737b]" />
      </div>
    </div>
  );
}

export default function App() {
  return (
    <div className="flex h-[1080px] w-[1920px] flex-col overflow-hidden bg-white font-['Open_Sans','Noto_Sans',sans-serif]">
      <TabStrip />
      <Toolbar />
      <Bookmarks />
      <div className="h-[2px] bg-[#cacaca]" />
      <div className="flex h-[865px] font-['Liberation_Sans',Arial,sans-serif]">
        <div className="w-[1895px]">
          <PageHeader />
          <NavBar />
          <Content />
        </div>
        <ScrollBar />
      </div>
      <TaskBar />
    </div>
  );
}
